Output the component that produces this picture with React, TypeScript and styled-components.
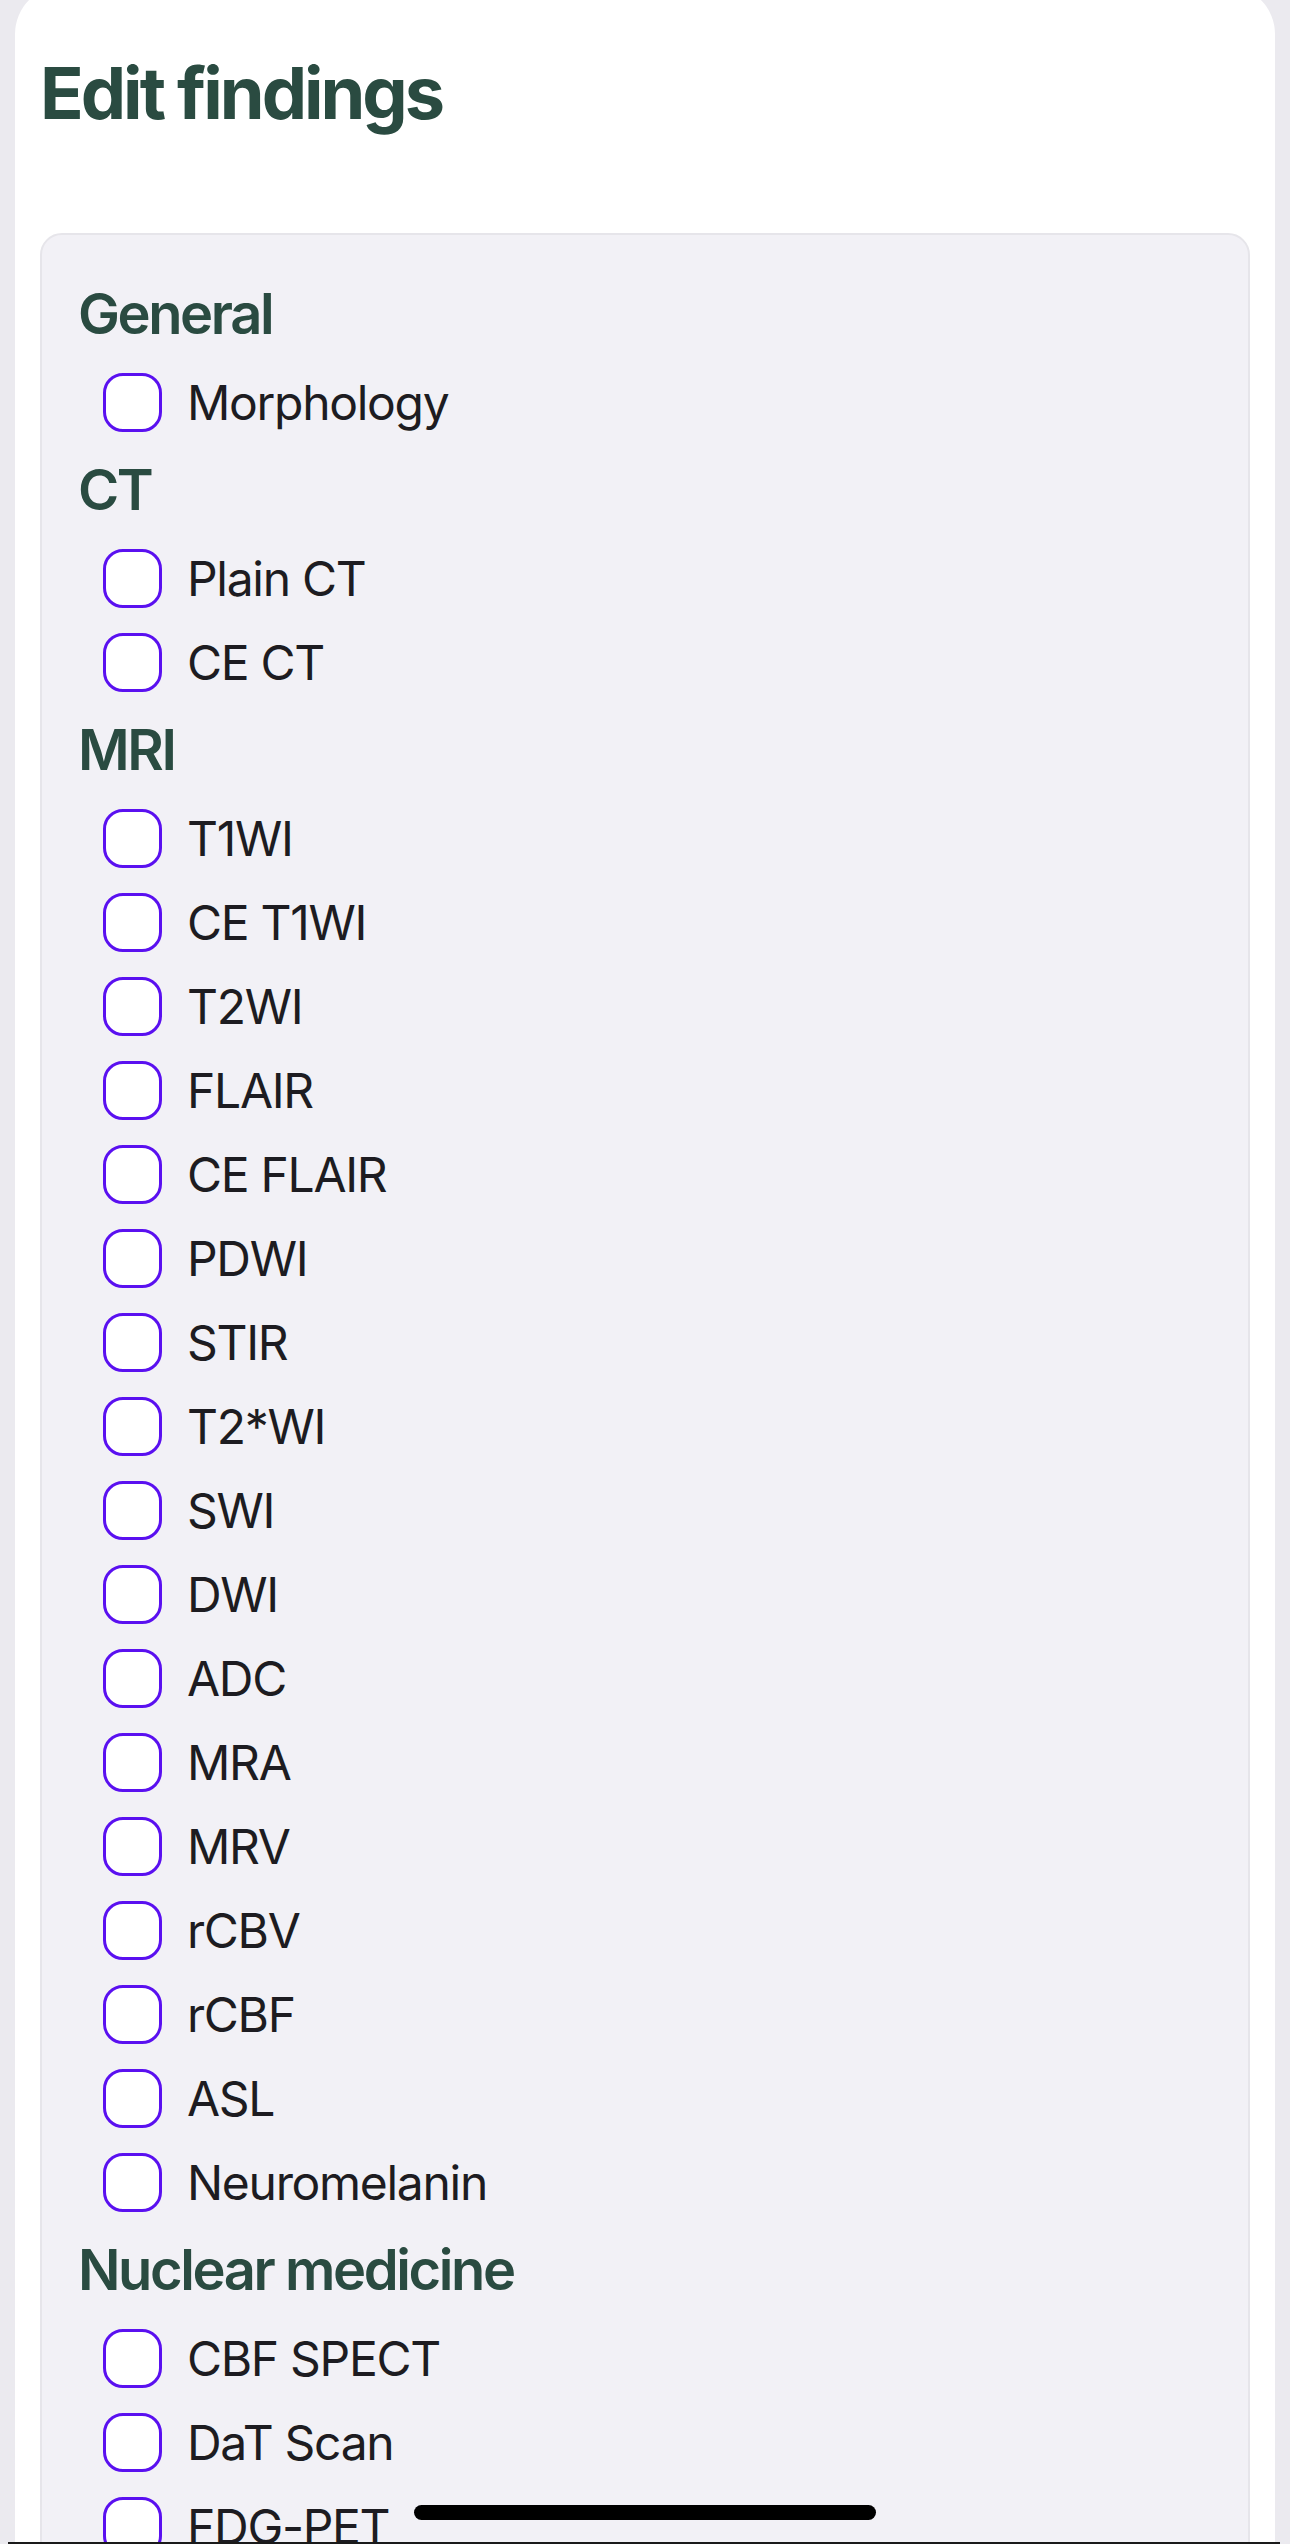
import React from "react";
import styled, { createGlobalStyle } from "styled-components";

const GlobalStyle = createGlobalStyle`
  html, body {
    margin: 0;
    padding: 0;
    background: #ebeaef;
  }
  body {
    font-family: "Inter", "Noto Sans", "Liberation Sans", sans-serif;
    -webkit-font-smoothing: antialiased;
    overflow: hidden;
  }
`;

const Screen = styled.div`
  width: 1290px;
  height: 2544px;
  overflow: hidden;
  position: relative;
  background: #ebeaef;
`;

const Sheet = styled.div`
  margin: -14px 15px 0;
  background: #ffffff;
  border-radius: 48px 48px 0 0;
  padding: 63px 25px 0;
  min-height: 2700px;
  box-sizing: border-box;
`;

const Title = styled.h1`
  margin: 0 0 96px;
  font-size: 72px;
  line-height: 88px;
  font-weight: 700;
  color: #2a4b41;
  letter-spacing: -3px;
`;

const Panel = styled.div`
  background: #f2f1f6;
  border: 2px solid #e6e5ea;
  border-radius: 22px;
  padding: 33px 34px 60px 36px;
`;

const Group = styled.section`
  display: flex;
  flex-direction: column;
`;

const GroupHeading = styled.h2`
  margin: 0;
  height: 92px;
  display: flex;
  align-items: center;
  font-size: 56px;
  font-weight: 600;
  color: #2a4b41;
  letter-spacing: -2.4px;
`;

const Row = styled.label`
  height: 84px;
  display: flex;
  align-items: center;
  margin-left: 25px;
`;

const Box = styled.span`
  width: 59px;
  height: 59px;
  box-sizing: border-box;
  border: 3px solid #5a10f0;
  border-radius: 20px;
  background: #ffffff;
  flex: none;
`;

const Label = styled.span`
  margin-left: 25px;
  font-size: 48px;
  font-weight: 400;
  color: #1d1c21;
  letter-spacing: -1.3px;
`;

const HomeIndicator = styled.div`
  position: absolute;
  left: 414px;
  bottom: 24px;
  width: 462px;
  height: 15px;
  border-radius: 8px;
  background: #000000;
`;

const BottomEdge = styled.div`
  position: absolute;
  left: 8px;
  right: 10px;
  bottom: 0;
  height: 2px;
  background: #1a1a1a;
`;

const groups: { title: string; items: string[] }[] = [
  { title: "General", items: ["Morphology"] },
  { title: "CT", items: ["Plain CT", "CE CT"] },
  {
    title: "MRI",
    items: [
      "T1WI",
      "CE T1WI",
      "T2WI",
      "FLAIR",
      "CE FLAIR",
      "PDWI",
      "STIR",
      "T2*WI",
      "SWI",
      "DWI",
      "ADC",
      "MRA",
      "MRV",
      "rCBV",
      "rCBF",
      "ASL",
      "Neuromelanin",
    ],
  },
  { title: "Nuclear medicine", items: ["CBF SPECT", "DaT Scan", "FDG-PET"] },
];

export default function App() {
  return (
    <Screen>
      <GlobalStyle />
      <Sheet>
        <Title>Edit findings</Title>
        <Panel>
          {groups.map((g) => (
            <Group key={g.title}>
              <GroupHeading>{g.title}</GroupHeading>
              {g.items.map((it) => (
                <Row key={it}>
                  <Box />
                  <Label>{it}</Label>
                </Row>
              ))}
            </Group>
          ))}
        </Panel>
      </Sheet>
      <HomeIndicator />
      <BottomEdge />
    </Screen>
  );
}
